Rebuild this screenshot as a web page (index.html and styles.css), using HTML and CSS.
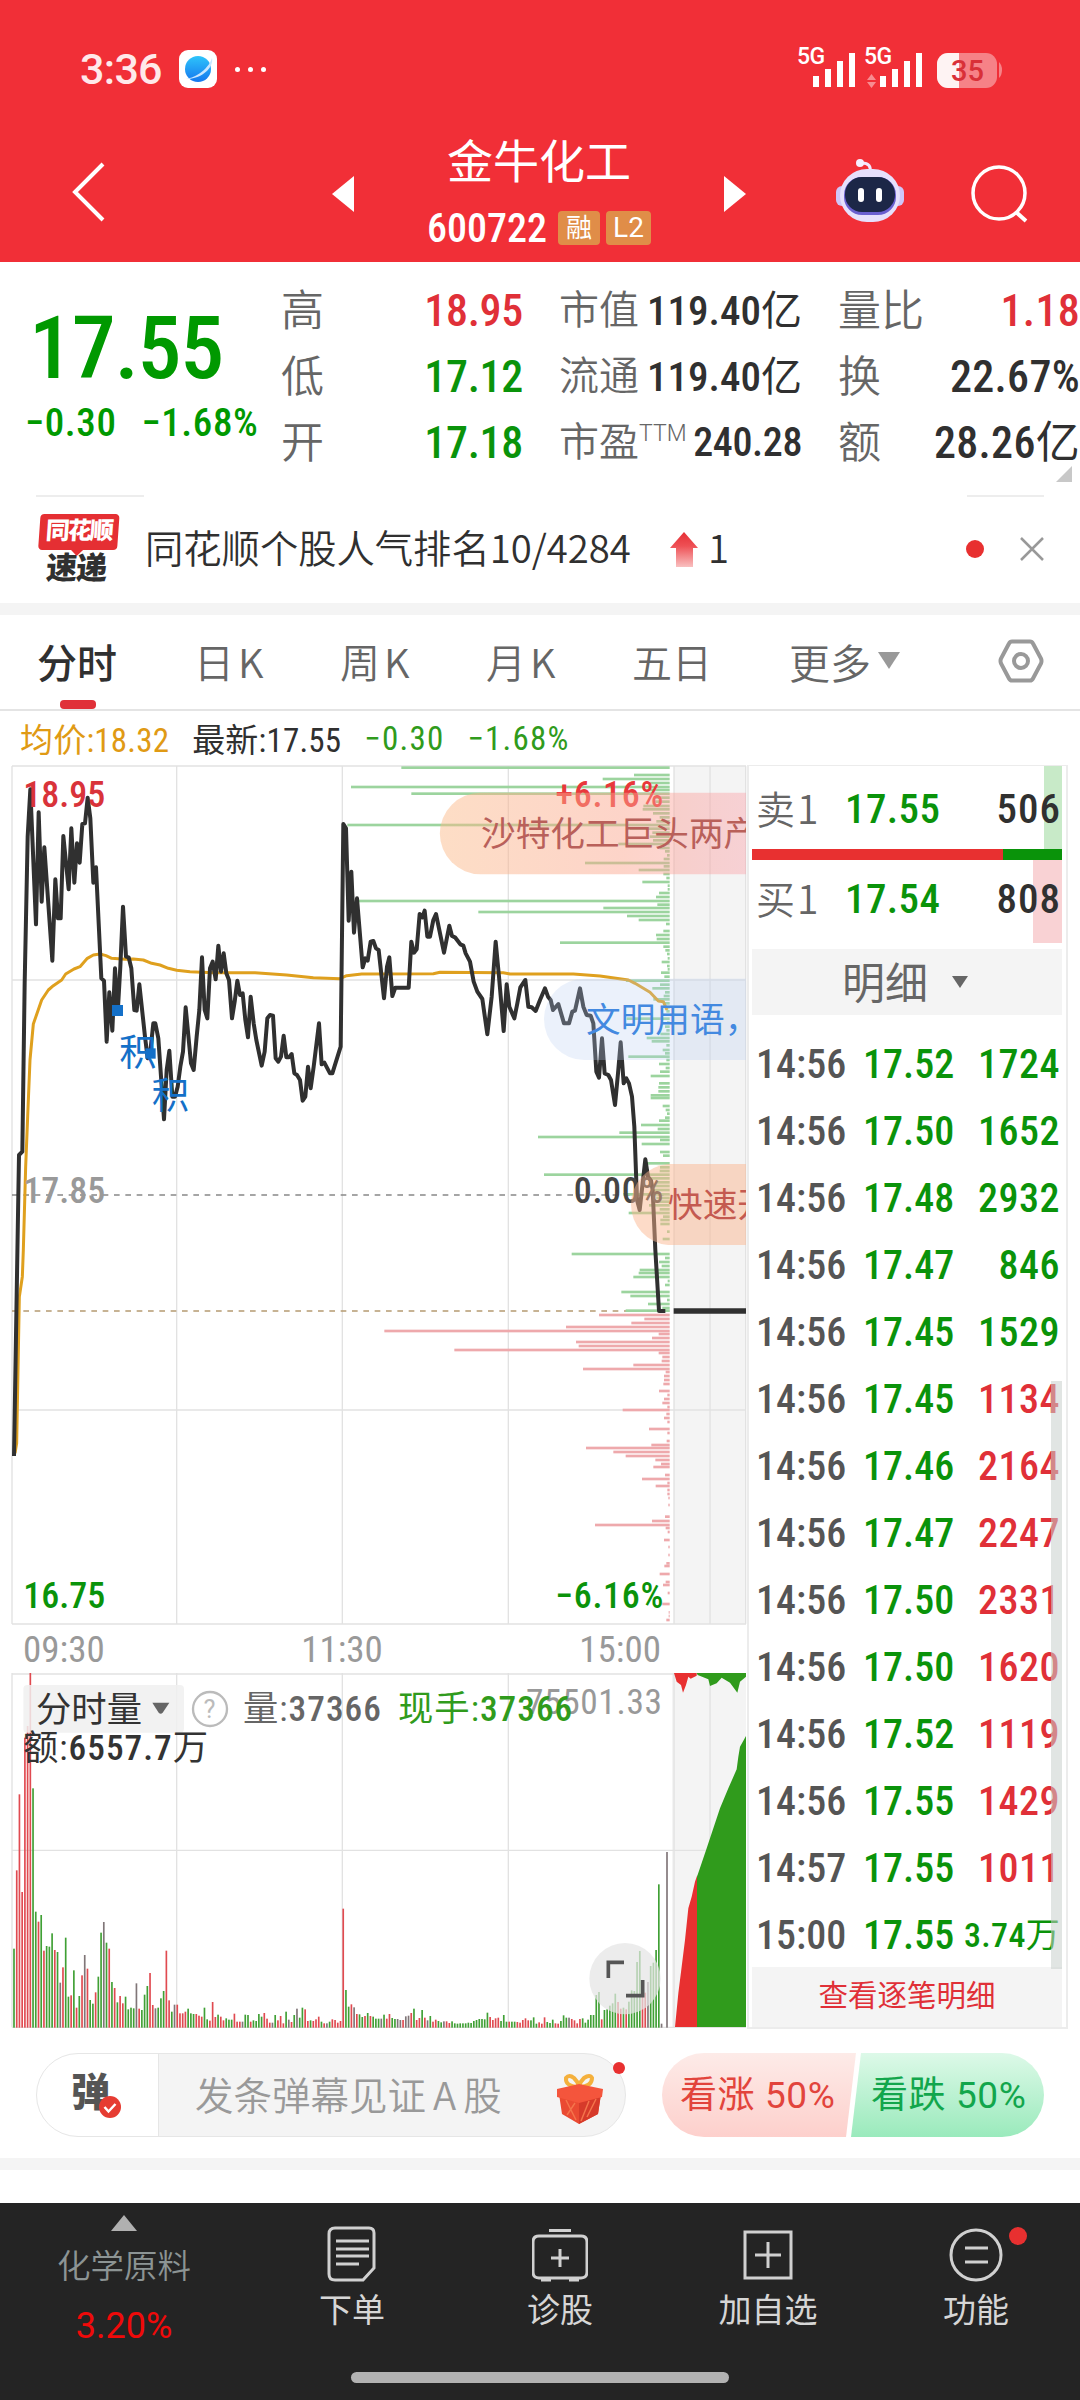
FILE: index.html
```
<!DOCTYPE html>
<html lang="zh-CN">

<head>
    <meta charset="UTF-8">
    <meta name="viewport" content="width=device-width, initial-scale=1.0">
    <title>金牛化工 600722</title>
    <link rel="stylesheet" href="styles.css">
</head>

<body>
    <header>
        <div class="status">
            <span class="clock">3:36</span>
            <svg class="app" width="38" height="38" viewBox="0 0 38 38">
                <defs>
                    <linearGradient id="planet" x1="0" y1="0" x2="0" y2="1">
                        <stop offset="0" stop-color="#2ec4fb" />
                        <stop offset="1" stop-color="#1577ee" />
                    </linearGradient>
                </defs>
                <rect width="38" height="38" rx="9" fill="#fff" />
                <circle cx="19" cy="19" r="13" fill="url(#planet)" />
                <path d="M5 29C15 29 29 20 33 8c2 9-10 22-28 21z" fill="#c9e6ff" />
            </svg>
            <span class="more"><i></i><i></i><i></i></span>
            <svg class="signals" width="206" height="44" viewBox="0 0 206 44">
                <g fill="#fff">
                    <text x="0" y="20" class="net">5G</text>
                    <text x="67" y="20" class="net">5G</text>
                    <path d="M16 32h6v11h-6zM28 25h6v18h-6zM40 17h6v26h-6zM52 9h6v34h-6z" />
                    <path d="M83 32h6v11h-6zM95 25h6v18h-6zM107 17h6v26h-6zM119 9h6v34h-6z" />
                    <path d="M70 36l4.500-6 4.500 6zM70 38l4.500 6 4.500-6z" opacity=".45" />
                    <rect x="140" y="9" width="60" height="35" rx="11" opacity=".4" />
                    <path d="M202 18q3 3 3 8t-3 8z" opacity=".4" />
                    <path d="M162 9h-11a11 11 0 0 0-11 11v13a11 11 0 0 0 11 11h11z" opacity=".9" />
                </g>
                <text x="154" y="37" class="power">35</text>
            </svg>
        </div>
        <div class="titlebar">
            <svg class="back" width="34" height="60" viewBox="0 0 34 60">
                <path d="M31 2L3 30l28 28" fill="none" stroke="#fff" stroke-width="4" />
            </svg>
            <svg class="prev" width="22" height="36" viewBox="0 0 22 36"><path d="M22 0v36L0 18z" fill="#fff" /></svg>
            <div class="names">
                <h1>金牛化工</h1>
                <p><b>600722</b><i>融</i><i>L2</i></p>
            </div>
            <svg class="next" width="22" height="36" viewBox="0 0 22 36"><path d="M0 0v36l22-18z" fill="#fff" /></svg>
            <svg class="robot" width="68" height="66" viewBox="0 0 68 66">
                <path d="M26 5q10 0 8 10" fill="none" stroke="#f3e8ff" stroke-width="3" />
                <circle cx="24" cy="5" r="4" fill="#f6efff" />
                <rect x="0" y="28" width="12" height="20" rx="6" fill="#cfc6f8" />
                <rect x="56" y="28" width="12" height="20" rx="6" fill="#cfc6f8" />
                <rect x="4" y="11" width="60" height="53" rx="27" fill="#e6e0fc" />
                <rect x="8" y="19" width="52" height="38" rx="18" fill="#6a5fd0" />
                <rect x="9" y="19" width="50" height="35" rx="17" fill="#1c2747" />
                <rect x="22" y="30" width="6" height="14" rx="3" fill="#fff" />
                <rect x="40" y="30" width="6" height="14" rx="3" fill="#fff" />
            </svg>
            <svg class="search" width="58" height="60" viewBox="0 0 58 60">
                <circle cx="28" cy="29" r="26" fill="none" stroke="#fff" stroke-width="3.500" />
                <path d="M45 48l10 9" stroke="#fff" stroke-width="4" />
            </svg>
        </div>
    </header>

    <section class="quote">
        <div class="price">
            <strong>17.55</strong>
            <p><span>−0.30</span><span>−1.68%</span></p>
        </div>
        <dl class="col1">
            <div><dt>高</dt><dd class="red">18.95</dd></div>
            <div><dt>低</dt><dd class="green">17.12</dd></div>
            <div><dt>开</dt><dd class="green">17.18</dd></div>
        </dl>
        <dl class="col2">
            <div><dt>市值</dt><dd>119.40<i>亿</i></dd></div>
            <div><dt>流通</dt><dd>119.40<i>亿</i></dd></div>
            <div><dt>市盈<sup>TTM</sup></dt><dd>240.28</dd></div>
        </dl>
        <dl class="col3">
            <div><dt>量比</dt><dd class="red">1.18</dd></div>
            <div><dt>换</dt><dd>22.67%</dd></div>
            <div><dt>额</dt><dd>28.26<i>亿</i></dd></div>
        </dl>
        <span class="corner"></span>
    </section>

    <section class="news">
        <div class="logo">
            <b>同花顺</b>
            <em>速递</em>
        </div>
        <p>同花顺个股人气排名10/4284</p>
        <svg class="up" width="28" height="35" viewBox="0 0 28 35">
            <defs>
                <linearGradient id="rise" x1="0" y1="0" x2="0" y2="1">
                    <stop offset="0" stop-color="#e62f35" />
                    <stop offset=".4" stop-color="#ee5055" />
                    <stop offset="1" stop-color="#f9c0c0" />
                </linearGradient>
            </defs>
            <path d="M14 0l14 16h-5v19H6V16H0z" fill="url(#rise)" />
        </svg>
        <p class="step">1</p>
        <span class="dot"></span>
        <svg width="24" height="24" viewBox="0 0 24 24"><path d="M1 1l22 22M23 1L1 23" stroke="#999" stroke-width="2.500" /></svg>
    </section>

    <nav class="tabs">
        <a class="on">分时</a>
        <a>日K</a>
        <a>周K</a>
        <a>月K</a>
        <a>五日</a>
        <a>更多<i></i></a>
        <svg width="46" height="44" viewBox="0 0 46 44">
            <path d="M14 2.500h18q2 0 3 2l8 15q1 2.500 0 5l-8 15q-1 2-3 2H14q-2 0-3-2l-8-15q-1-2.500 0-5l8-15q1-2 3-2z" fill="none" stroke="#999" stroke-width="4" />
            <circle cx="23" cy="22" r="7" fill="none" stroke="#999" stroke-width="4" />
        </svg>
    </nav>

    <div class="info">
        <span class="avg">均价:18.32</span>
        <span class="last">最新:17.55</span>
        <span class="diff">−0.30</span>
        <span class="diff">−1.68%</span>
    </div>

    <main>
        <div class="charts">
            <!-- both charts use 3 units per pixel -->
            <svg class="trend" width="747" height="860" viewBox="0 45 2241 2580">
                <defs>
                    <linearGradient id="hot">
                        <stop offset="0" stop-color="#fbb987" stop-opacity=".48" />
                        <stop offset=".6" stop-color="#fba58e" stop-opacity=".48" />
                        <stop offset="1" stop-color="#fb97a0" stop-opacity=".38" />
                    </linearGradient>
                    <clipPath id="plot"><rect x="0" y="45" width="2238" height="2580" /></clipPath>
                </defs>
                <rect x="2022" y="48" width="216" height="2574" fill="#f4f4f4" />
                <path class="grid" d="M36 48H2238M36 690H2238M36 1980H2238M36 2622H2238M36 48V2622M530 48V2622M1027 48V2622M1525 48V2622M2022 48V2622M2130 48V2622M2237 48V2622" />
                <path d="M36 1335H2009" stroke="#888" stroke-width="5" stroke-dasharray="17 17" />
                <path d="M36 1683H2009" stroke="#b59a72" stroke-width="5" stroke-dasharray="17 17" />
                <g id="depth"></g>
                <polyline class="avgline" points="45,2110 50,2080 58,1640 67,1580 70,1500 77,1250 83,1100 90,930 100,822 125,750 145,720 160,707 185,690 197,672 222,657 240,650 262,625 280,615 300,612 318,617 335,625 375,628 400,627 430,630 455,640 480,645 505,655 530,661 570,665 640,668 765,668 860,675 940,683 1020,686 1040,677 1085,672 1300,671 1320,667 1510,668 1530,672 1720,672 1800,678 1885,690 1905,700 1950,727 1975,753 1990,755 2001,780" />
                <polyline class="priceline" points="42,2118 57,1215 67,1205 74,700 83,260 91,118 108,523 116,187 125,455 133,292 157,632 166,388 174,505 182,505 190,258 206,418 214,235 223,398 231,280 239,338 247,222 255,220 263,143 271,205 280,398 288,352 304,685 312,692 320,875 328,727 337,842 345,655 353,790 361,650 369,470 378,620 386,622 394,655 403,780 410,782 418,703 435,860 443,925 452,895 460,820 466,820 475,865 492,1108 500,960 508,902 517,1040 525,1040 533,1010 541,950 549,905 557,772 573,940 581,960 590,860 598,780 606,622 614,780 622,805 630,655 638,635 647,688 655,587 663,665 671,610 679,670 687,690 696,805 704,755 712,692 720,735 728,730 736,810 744,862 752,740 761,820 769,870 785,947 794,905 802,805 810,795 819,797 827,925 835,935 843,920 851,857 859,922 867,922 875,912 883,970 891,975 900,990 908,1052 916,1040 924,950 932,1015 941,950 957,820 965,943 973,938 990,970 997,970 1022,890 1030,222 1038,235 1046,512 1054,365 1062,548 1071,445 1088,652 1096,625 1103,632 1112,575 1120,573 1128,595 1136,600 1152,745 1161,650 1168,622 1177,738 1186,713 1226,713 1234,575 1242,608 1250,598 1259,492 1267,502 1274,482 1282,560 1290,560 1300,510 1308,492 1332,608 1348,527 1356,558 1365,562 1381,583 1390,587 1397,610 1410,635 1421,695 1432,725 1447,747 1462,853 1475,740 1487,575 1497,680 1511,843 1520,703 1528,770 1543,805 1552,760 1561,712 1576,690 1585,770 1595,772 1607,783 1620,750 1635,715 1644,740 1652,750 1659,780 1675,762 1692,820 1707,820 1717,785 1725,782 1740,715 1750,770 1760,795 1772,797 1780,820 1789,965 1797,983 1806,865 1814,970 1825,975 1833,990 1845,1065 1854,970 1862,877 1871,1000 1879,985 1887,1000 1896,1040 1903,1130 1911,1350 1919,1380 1936,1228 1944,1280 1953,1292 1958,1320 1966,1500 1977,1683 1996,1683" />
                <path d="M2021 1683H2238" stroke="#303030" stroke-width="16" />
                <g class="mark">
                    <rect x="336" y="765" width="33" height="33" />
                    <rect x="436" y="895" width="31" height="31" />
                    <text x="358" y="948">积</text>
                    <text x="455" y="1078">积</text>
                </g>
                <g class="label">
                    <text x="70" y="170" fill="#d9333a">18.95</text>
                    <text x="70" y="1358" fill="#999">17.85</text>
                    <text x="70" y="2573" fill="#0a930a">16.75</text>
                    <text x="1992" y="170" fill="#e8383b" class="pct">+6.16%</text>
                    <text x="1992" y="1358" fill="#444" class="pct">0.00%</text>
                    <text x="1992" y="2573" fill="#0a930a" class="pct">−6.16%</text>
                </g>
                <g class="danmu" clip-path="url(#plot)">
                    <path d="M2240 128H1442a122 122 0 0 0 0 245H2240z" fill="url(#hot)" />
                    <text x="1443" y="287" fill="#b9605a">沙特化工巨头两产</text>
                    <path d="M2240 686H1754a122 122 0 0 0 0 244H2240z" fill="#b8ccf2" fill-opacity=".28" />
                    <text x="1758" y="845" fill="#4389e0">文明用语，</text>
                    <path d="M2240 1242H2004a122 122 0 0 0 0 243H2240z" fill="#fbb48c" fill-opacity=".48" />
                    <text x="2004" y="1400" fill="#c45a50">快速开</text>
                </g>
            </svg>
            <div class="axis"><span>09:30</span><span>11:30</span><span>15:00</span></div>
            <svg class="volume" width="747" height="355" viewBox="0 39 2241 1065">
                <rect x="2016" y="39" width="222" height="1062" fill="#f4f4f4" />
                <path class="grid" d="M36 42H2238M36 571H2238M36 1102H2238M36 39V1102M530 39V1102M1027 39V1102M1525 39V1102M2022 39V1102M2130 39V1102" />
                <g id="bars"></g>
                <path d="M2025 1101L2035 1000 2045 920 2055 840 2065 745 2075 710 2085 665 2092 645V1101zM2022 39L2030 65 2043 75 2049 98 2058 75 2065 50 2072 56 2090 47V39z" fill="#e83030" />
                <path d="M2091 1101V650L2120 565 2160 445 2185 385 2210 328 2215 290 2220 260 2238 228V1101zM2090 39L2093 45 2125 58 2130 78 2150 70 2165 53 2190 68 2212 98 2220 65 2238 50V39z" fill="#309b1c" />
                <rect x="70" y="75" width="482" height="143" rx="12" fill="#f0f0f0" fill-opacity=".85" />
                <path d="M457 128h51l-20 30q-6 6-12 0z" fill="#666" />
                <circle cx="630" cy="147" r="51" fill="none" stroke="#bbb" stroke-width="7" />
                <g class="label">
                    <text x="1988" y="163" fill="#999" class="pct">75501.33</text>
                    <text x="108" y="187" fill="#333" class="cn">分时量</text>
                    <text x="630" y="174" fill="#bbb" text-anchor="middle" class="ask">?</text>
                    <text x="729" y="183" fill="#666">量:<tspan>37366</tspan></text>
                    <text x="1194" y="183" fill="#309b1c">现手:<tspan>37366</tspan></text>
                    <text x="69" y="299" fill="#333">额:<tspan>6557.7</tspan>万</text>
                </g>
                <circle cx="1875" cy="956" r="107" fill="#e4e4e4" fill-opacity=".72" />
                <path d="M1825 954V907H1872M1878 1007H1928V960" fill="none" stroke="#555" stroke-width="11" />
            </svg>
        </div>

        <aside>
            <div class="level sell"><span>卖1</span><b>17.55</b><em>506</em></div>
            <div class="ratio"></div>
            <div class="level buy"><span>买1</span><b>17.54</b><em>808</em></div>
            <div class="pick">明细<i></i></div>
            <ul id="ticks">
                <li><span>14:56</span><b>17.52</b><em class="green">1724</em></li>
                <li><span>14:56</span><b>17.50</b><em class="green">1652</em></li>
                <li><span>14:56</span><b>17.48</b><em class="green">2932</em></li>
                <li><span>14:56</span><b>17.47</b><em class="green">846</em></li>
                <li><span>14:56</span><b>17.45</b><em class="green">1529</em></li>
                <li><span>14:56</span><b>17.45</b><em class="red">1134</em></li>
                <li><span>14:56</span><b>17.46</b><em class="red">2164</em></li>
                <li><span>14:56</span><b>17.47</b><em class="red">2247</em></li>
                <li><span>14:56</span><b>17.50</b><em class="red">2331</em></li>
                <li><span>14:56</span><b>17.50</b><em class="red">1620</em></li>
                <li><span>14:56</span><b>17.52</b><em class="red">1119</em></li>
                <li><span>14:56</span><b>17.55</b><em class="red">1429</em></li>
                <li><span>14:57</span><b>17.55</b><em class="red">1011</em></li>
                <li><span>15:00</span><b>17.55</b><em class="green small">3.74<i>万</i></em></li>
            </ul>
            <a class="all">查看逐笔明细</a>
        </aside>
    </main>

    <section class="talk">
        <div class="send">
            <span class="toggle">弹
                <svg width="22" height="22" viewBox="0 0 22 22">
                    <circle cx="11" cy="11" r="11" fill="#e63c32" />
                    <path d="M5.500 11l4 4.500 7-7.500" fill="none" stroke="#fff" stroke-width="2.500" />
                </svg>
            </span>
            <span class="hint">发条弹幕见证<i>A</i>股</span>
            <svg class="gift" width="46" height="50" viewBox="0 0 46 50">
                <path d="M21 13Q8 12 9 4q3-4 8 0 4 4 5 8 1-4 5-8 6-4 8 0 0 8-12 9z" fill="none" stroke="#f4b03c" stroke-width="4" />
                <path d="M2 20l20 6 22-6-3 20-19 10-17-10z" fill="#ea4a32" />
                <path d="M22 26l22-6-3 20-19 10z" fill="#d63a2a" />
                <path d="M0 15l22-5 24 5-1 8-23 6-22-6z" fill="#f4553c" />
                <path d="M9 26l10 20M18 29l-8 12M32 27l-8 20M39 25l-9 18" stroke="#f4744c" stroke-width="1.500" />
            </svg>
            <span class="dot"></span>
        </div>
        <div class="vote">
            <span class="bull">看涨 50%</span>
            <span class="bear">看跌 50%</span>
        </div>
    </section>

    <footer>
        <div class="sector">
            <i></i>
            <span>化学原料</span>
            <b>3.20%</b>
        </div>
        <div class="item">
            <svg width="56" height="56" viewBox="0 0 56 56">
                <path d="M11 2h34q5 0 5 5v35l-11 12H11q-6 0-6-6V8q0-6 6-6zM12 15h33M12 23h33M12 30h33M12 38h23" />
            </svg>
            <span>下单</span>
        </div>
        <div class="item">
            <svg width="56" height="56" viewBox="0 0 56 56">
                <path d="M17 4.500h22M7 10h42q6 0 6 6v30q0 6-6 6H7q-6 0-6-6V16q0-6 6-6zM28 23v18M19 32h18M9 54h10M37 54h10" />
            </svg>
            <span>诊股</span>
        </div>
        <div class="item">
            <svg width="56" height="56" viewBox="0 0 56 56">
                <path d="M5 6h46v46H5zM28 16v26M15 29h26" />
            </svg>
            <span>加自选</span>
        </div>
        <div class="item">
            <svg width="56" height="56" viewBox="0 0 56 56">
                <circle cx="28" cy="29" r="25" />
                <path d="M17 22h23M17 36h23" />
            </svg>
            <span>功能</span>
            <em class="dot"></em>
        </div>
        <div class="homebar"></div>
    </footer>

    <script src="script.js"></script>
</body>

</html>
```
FILE: styles.css
```
* {
    box-sizing: border-box;
}

body {
    margin: 0;
    background: #fff;
    color: #303030;
    font-family: "Roboto Condensed", "Noto Sans CJK SC", sans-serif;
    overflow-x: hidden;
}

h1, p, ul, dl, dd {
    margin: 0;
    padding: 0;
    font-weight: 400;
}

i, em {
    font-style: normal;
}

svg {
    display: block;
    flex: none;
}

.red {
    color: #e03038;
}

.green {
    color: #0a930a;
}

.dot {
    border-radius: 50%;
    background: #e83030;
}

/* header */
header {
    height: 262px;
    background: #f12f37;
    color: #fff;
}

.status {
    height: 138px;
    padding: 0 79px 0 80px;
    display: flex;
    align-items: center;
}

.clock {
    font: 500 43px Roboto, sans-serif;
    color: #ffe9ea;
    width: 99px;
    letter-spacing: -.7px;
}

.more {
    display: flex;
    gap: 8px;
    margin-left: 18px;
}

.more i {
    width: 5px;
    height: 5px;
    border-radius: 50%;
    background: #fff;
}

.signals {
    margin: -6px -2px 0 auto;
    overflow: visible;
}

.net {
    font: 500 23px Roboto, sans-serif;
    letter-spacing: -.5px;
}

.power {
    font: 500 29px Roboto, sans-serif;
    fill: #d93038;
}

.titlebar {
    display: flex;
    align-items: flex-start;
}

.back {
    margin: 24px 0 0 72px;
}

.prev {
    margin: 38px 0 0 226px;
}

.names {
    width: 370px;
    text-align: center;
}

.names h1 {
    font-size: 46px;
    line-height: 48px;
}

.names p {
    display: flex;
    justify-content: center;
    align-items: center;
    gap: 6px;
    margin-top: 22px;
    height: 40px;
}

.names b {
    font-size: 40px;
    font-weight: 500;
    margin-right: 5px;
}

.names i {
    background: #e08d48;
    border-radius: 4px;
    height: 34px;
    line-height: 34px;
    padding: 0 8px;
    font-size: 26px;
}

.names i:last-child {
    font: 28px/34px Roboto, sans-serif;
    padding: 0 7px;
}

.next {
    margin: 38px 90px 0 0;
}

.robot {
    margin: 20px 67px 0 0;
}

.search {
    margin-top: 26px;
}

/* quote */
.quote {
    position: relative;
    height: 233px;
    padding-top: 16px;
    display: flex;
}

.price {
    width: 281px;
    color: #009900;
}

.price strong {
    display: block;
    margin: 26px 0 0 29px;
    font-size: 88px;
    line-height: 88px;
    font-weight: 500;
    letter-spacing: -1.3px;
}

.price p {
    display: flex;
    gap: 25px;
    margin: 8px 0 0 25px;
    font-size: 39px;
    line-height: 46px;
    font-weight: 500;
    letter-spacing: .6px;
    white-space: nowrap;
}

.quote dl div {
    display: flex;
    justify-content: space-between;
    align-items: center;
    height: 66px;
    line-height: 66px;
}

.quote dt {
    color: #666;
    font-size: 43px;
    font-weight: 350;
    white-space: nowrap;
}

.quote dd {
    font-size: 44px;
    font-weight: 500;
    white-space: nowrap;
}

.quote dd i {
    font-weight: 400;
}

.quote sup {
    font: 300 23px/20px Roboto, sans-serif;
    vertical-align: 15px;
}

.col1 {
    width: 242px;
}

.col1 dd {
    letter-spacing: -.3px;
}

.col2 {
    width: 243px;
    margin-left: 36px;
}

.quote .col2 dt {
    font-size: 40px;
}

.quote .col2 dd {
    font-size: 41px;
}

.quote .col2 div:last-child dd {
    font-size: 40px;
    letter-spacing: -.4px;
}

.col3 {
    width: 242px;
    margin-left: 36px;
}

.col3 dd {
    letter-spacing: .3px;
}

.corner {
    position: absolute;
    right: 8px;
    bottom: 13px;
    border-left: 16px solid transparent;
    border-bottom: 16px solid #c8c8c8;
}

/* news */
.news {
    height: 120px;
    padding: 0 36px;
    display: flex;
    align-items: center;
    border-bottom: 12px solid #f4f4f4;
    background: linear-gradient(#ededed, #ededed) 36px 0 / 108px 2px no-repeat, linear-gradient(#ededed, #ededed) 967px 0 / 77px 2px no-repeat;
}

.logo {
    width: 79px;
    margin: 3px 28px 0 2px;
    text-align: center;
    transform: skewX(-4deg);
}

.logo b {
    display: block;
    position: relative;
    height: 36px;
    background: #e52f33;
    border-radius: 4px;
    color: #fff;
    font-size: 24px;
    line-height: 35px;
    font-weight: 900;
    letter-spacing: -2px;
}

.logo b::after {
    content: "";
    position: absolute;
    left: 33px;
    top: 36px;
    border: 6px solid transparent;
    border-top-color: #e52f33;
}

.logo em {
    display: block;
    font-size: 31px;
    line-height: 38px;
    font-weight: 900;
    letter-spacing: -1px;
}

.news p {
    font-family: "Noto Sans CJK SC", sans-serif;
    font-size: 38.3px;
    line-height: 50px;
    font-weight: 350;
    width: 525px;
    margin-top: -4px;
    white-space: nowrap;
}

.news .up {
    margin-right: 10px;
}

.news .step {
    width: auto;
    margin-right: auto;
}

.news .dot {
    width: 18px;
    height: 18px;
    margin-right: 36px;
}

/* tabs */
.tabs {
    display: flex;
    align-items: center;
    height: 96px;
    border-bottom: 2px solid #e4e4e4;
    padding: 0 36px 3px 37px;
    font-size: 40px;
    color: #666;
}

.tabs a {
    position: relative;
    font-family: "Noto Sans CJK SC", sans-serif;
    font-weight: 350;
    line-height: 60px;
    letter-spacing: 4px;
    white-space: nowrap;
    width: 146px;
}

.tabs a:first-child {
    width: 157px;
}

.tabs a:nth-child(5) {
    width: 157px;
    letter-spacing: 0;
}

.tabs a:nth-child(6) {
    width: auto;
    display: flex;
    align-items: center;
    gap: 7px;
    font-size: 41px;
    letter-spacing: 0;
}

.tabs a i {
    border: 11px solid transparent;
    border-top: 17px solid #999;
    border-bottom: 0;
}

.tabs .on {
    color: #303030;
    font-weight: 500;
    letter-spacing: 0;
}

.tabs .on::after {
    content: "";
    position: absolute;
    left: 23px;
    bottom: -18px;
    width: 36px;
    height: 9px;
    border-radius: 4px;
    background: #e03038;
}

.tabs svg {
    margin-left: auto;
}

.info {
    height: 54px;
    padding: 0 0 0 20px;
    display: flex;
    align-items: center;
    gap: 23px;
    font-size: 33px;
    letter-spacing: .2px;
}

.avg {
    color: #e09a14;
}

.diff {
    color: #309b1c;
    letter-spacing: 1.2px;
    padding-top: 1px;
}

/* charts */
main {
    display: flex;
    height: 1264px;
}

.charts {
    width: 747px;
}

.grid {
    stroke: #e2e2e2;
    stroke-width: 4;
    fill: none;
}

.avgline {
    fill: none;
    stroke: #dfa01e;
    stroke-width: 9;
    stroke-linejoin: round;
}

.priceline {
    fill: none;
    stroke: #303030;
    stroke-width: 12;
    stroke-linejoin: round;
}

.label {
    font-size: 108px;
    font-weight: 500;
}

.label .pct {
    letter-spacing: 2px;
    text-anchor: end;
}

.volume .label {
    font-size: 106px;
    font-weight: 400;
    letter-spacing: 3px;
}

.volume .label tspan {
    font-weight: 500;
}

.volume .label .ask {
    font: 76px Roboto, sans-serif;
}

.volume .label .cn {
    letter-spacing: 0;
}

.danmu {
    font-size: 104px;
}

.mark {
    fill: #1470c8;
    font-size: 112px;
}

.axis {
    height: 48px;
    padding: 0 86px 0 23px;
    display: flex;
    justify-content: space-between;
    font-size: 37px;
    line-height: 50px;
    color: #999;
}

/* order book */
aside {
    width: 321px;
    border: 2px solid #ececec;
    border-top-width: 1px;
    padding: 0 4px 0 3px;
}

.level {
    display: flex;
    align-items: center;
    height: 83px;
    padding: 2px 1px 0 4px;
    font-size: 41px;
}

.level span {
    width: 89px;
    font: 350 39px/60px "Noto Sans CJK SC", sans-serif;
    letter-spacing: 2px;
    margin-top: -3px;
    color: #666;
}

.level b {
    color: #0a930a;
    font-weight: 500;
    letter-spacing: .4px;
}

.level em {
    margin-left: auto;
    font-weight: 500;
    letter-spacing: 1px;
}

.sell {
    background: linear-gradient(#c8eac8, #c8eac8) right / 18px 100% no-repeat;
}

.buy {
    background: linear-gradient(#f9d2d4, #f9d2d4) right / 29px 100% no-repeat;
    padding-bottom: 8px;
}

.ratio {
    height: 11px;
    background: linear-gradient(90deg, #e83030 251px, #0a930a 251px);
}

.pick {
    display: flex;
    align-items: center;
    justify-content: center;
    gap: 24px;
    height: 66px;
    margin: 6px 0 16px;
    padding: 0 4px 4px 0;
    background: #f4f4f4;
    color: #666;
    font-size: 43px;
}

.pick i {
    border: 8px solid transparent;
    border-top: 12px solid #666;
    border-bottom: 0;
    margin-top: 4px;
}

ul {
    position: relative;
    list-style-type: none;
    font-size: 40px;
    font-weight: 500;
}

ul::after {
    content: "";
    position: absolute;
    right: 0;
    bottom: 0;
    width: 11px;
    height: 588px;
    background: rgba(200, 208, 204, 0.55);
}

li {
    display: flex;
    align-items: center;
    height: 67px;
    line-height: 67px;
    padding: 0 2px 0 4px;
}

li span {
    width: 107px;
    color: #555;
}

li b {
    color: #0a930a;
    font-weight: 500;
}

li em {
    margin-left: auto;
    letter-spacing: .5px;
}

li .small {
    font-size: 34px;
    letter-spacing: .3px;
}

li .small i {
    font-weight: 400;
}

.all {
    display: block;
    height: 60px;
    margin-top: -2px;
    background: #f4f4f4;
    color: #e03038;
    font-size: 29.5px;
    line-height: 59px;
    text-align: center;
}

/* danmu bar */
.talk {
    display: flex;
    justify-content: space-between;
    height: 141px;
    padding: 24px 36px 0;
    border-bottom: 12px solid #f4f4f4;
}

.send {
    position: relative;
    width: 590px;
    height: 84px;
    border: 1px solid #e6e6e6;
    border-radius: 42px;
    display: flex;
    align-items: center;
    background: linear-gradient(90deg, #fff 121px, #e6e6e6 121px, #e6e6e6 122px, #f4f4f4 122px);
}

.toggle {
    position: relative;
    width: 158px;
    margin-top: -4px;
    padding-left: 34px;
    color: #555;
    font-size: 39px;
    font-weight: 900;
    line-height: 60px;
}

.toggle svg {
    position: absolute;
    left: 62px;
    top: 33px;
}

.hint {
    font-family: "Noto Sans CJK SC", sans-serif;
    font-size: 38.5px;
    font-weight: 350;
    color: #999;
    width: 362px;
    margin-top: -5px;
    white-space: nowrap;
}

.hint i {
    margin: 0 7px;
}

.gift {
    margin-top: 8px;
}

.send .dot {
    position: absolute;
    right: 0;
    top: 8px;
    width: 12px;
    height: 12px;
}

.vote {
    display: flex;
    width: 382px;
    height: 84px;
    border-radius: 42px;
    overflow: hidden;
    font: 37px/85px Roboto, "Noto Sans CJK SC", sans-serif;
    letter-spacing: .6px;
}

.bull {
    width: 194px;
    padding-left: 18px;
    background: linear-gradient(#fdebe8, #fdd0cc);
    color: #e2443c;
    clip-path: polygon(0 0, 100% 0, 184px 100%, 0 100%);
}

.bear {
    width: 193px;
    margin-left: -5px;
    padding-left: 20px;
    background: linear-gradient(#ddf9e8, #9aeabc);
    color: #12a64c;
    clip-path: polygon(10px 0, 100% 0, 100% 100%, 0 100%);
}

/* bottom nav */
footer {
    position: relative;
    display: flex;
    height: 197px;
    margin-top: 33px;
    background: #242424;
    color: #d6d6d6;
    font-size: 33px;
}

.sector {
    width: 248px;
    padding-top: 12px;
    display: flex;
    flex-direction: column;
    align-items: center;
    line-height: 50px;
    color: #8c9494;
}

.sector i {
    border: 13px solid transparent;
    border-bottom: 16px solid #b0b0b0;
    border-top: 0;
}

.sector span {
    margin-top: 11px;
    font-size: 33.5px;
    font-weight: 350;
}

.sector b {
    font: 36px/50px Roboto, sans-serif;
    margin-top: 9px;
    color: #f00a0a;
}

.item {
    position: relative;
    width: 208px;
    padding-top: 23px;
    display: flex;
    flex-direction: column;
    align-items: center;
}

.item svg {
    fill: none;
    stroke: #d0d0d0;
    stroke-width: 3;
}

.item span {
    line-height: 50px;
    margin-top: 4px;
}

.item .dot {
    position: absolute;
    right: 53px;
    top: 24px;
    width: 18px;
    height: 18px;
}

.homebar {
    position: absolute;
    left: 351px;
    bottom: 17px;
    width: 378px;
    height: 11px;
    border-radius: 6px;
    background: #b2b2b2;
}
```
FILE: script.js
```
// volume per minute: direction letter + height, "-" is an empty minute
const volume = `g237 r472 r700 r407 r870 r905 r1064 g718 g348 r318 g338 r231 g245 g243 g283 r233 g227 k135 r181 g270
g93 r97 g172 r60 g95 r157 k218 r177 g83 g72 r106 g153 g285 k317 g255 r237 g137 r119 g76 r95 r73 g93 g55 g60 g58 k133
r57 g53 g99 g125 r164 r68 k58 g60 g88 g110 r231 r82 g48 k69 r69 r43 r43 r48 g57 g43 g41 r41 r36 r33 g60 g25 r21 r77
r32 g39 r33 r22 g28 g24 g24 r42 r18 r18 k18 g39 g38 r18 g22 g20 g41 g33 r44 r27 r15 k15 g38 r22 r35 r13 g48 k24 r17
g38 k57 g30 g60 r55 r20 g22 r20 r25 r33 g18 r13 k13 g18 r25 r23 r15 r20 r357 g113 g63 r70 k61 r41 g40 g32 r35 g44
r35 g33 g27 g27 k27 g39 r27 r41 g29 g26 k26 k23 r23 k34 k36 r44 g57 r23 r29 g53 r30 k22 g35 r18 r24 g20 g16 k19 r19
r14 g19 g13 g12 g13 g13 g13 g15 g14 g20 g23 g26 g26 g25 g45 r32 r23 r28 r30 g20 g38 g18 r18 g18 g18 r17 r15 r23 r28
r22 g22 g31 g12 r16 r12 r31 g17 g14 g24 r13 r12 g20 g37 g30 k30 r26 r22 r13 r26 g28 g15 g24 g38 g38 g98 g107 r25 g53
g55 g66 g73 g102 r77 r57 g60 r55 g78 g112 g110 g197 g230 r110 r105 k137 g185 g195 g233 g430 k12 - k527`.split(/\s+/);

const colors = { r: '#e04a50', g: '#40a035', k: '#807678' };

let bars = '';
const step = (2001 - 42) / (volume.length - 1);
volume.forEach(function (v, i) {
    if (v === '-') return;
    const h = Number(v.slice(1));
    const x = 42 + i * step - 2.5;
    bars += `<rect x="${x.toFixed(1)}" y="${1103 - h}" width="5" height="${h}" fill="${colors[v[0]]}"/>`;
});
document.getElementById('bars').innerHTML = bars;

// traded amount by price: [y, length]
const sells = [
    [53, 805], [75, 107], [87, 201], [99, 59], [111, 956], [120, 60], [131, 775], [143, 45], [155, 50], [168, 79], [178, 81],
    [190, 50], [202, 30], [214, 40], [225, 967], [236, 119], [248, 52], [260, 60], [271, 50], [282, 154], [294, 30], [304, 14],
    [316, 8], [327, 18], [339, 254], [349, 18], [360, 93], [372, 19], [384, 10], [396, 82], [407, 6], [418, 6], [429, 32],
    [441, 41], [453, 934], [464, 37], [474, 199], [486, 574], [498, 128], [510, 93], [522, 11], [543, 19], [555, 41], [567, 39],
    [578, 329], [590, 19], [601, 13], [612, 8], [625, 6], [636, 24], [648, 8], [658, 6], [668, 26], [680, 16], [692, 131],
    [704, 29], [715, 52], [727, 14], [738, 18], [748, 49], [760, 20], [772, 12], [784, 10], [806, 129], [818, 8], [830, 14],
    [841, 10], [852, 28], [864, 69], [874, 54], [886, 10], [900, 21], [910, 14], [920, 124], [930, 10], [942, 32], [954, 12],
    [965, 29], [978, 57], [1000, 32], [1012, 34], [1024, 34], [1036, 57], [1044, 57], [1068, 21], [1080, 12], [1091, 8],
    [1103, 14], [1112, 32], [1125, 86], [1137, 36], [1148, 151], [1161, 395], [1170, 29], [1182, 84], [1206, 29], [1217, 20],
    [1240, 69], [1252, 29], [1263, 30], [1274, 377], [1285, 59], [1297, 40], [1308, 62], [1320, 50], [1333, 139], [1344, 40],
    [1355, 50], [1366, 62], [1378, 30], [1389, 123], [1400, 20], [1410, 28], [1422, 28], [1445, 8], [1467, 21], [1512, 294],
    [1524, 14], [1536, 32], [1548, 24], [1560, 90], [1569, 93], [1581, 109], [1593, 6], [1605, 14], [1626, 145], [1638, 118],
    [1650, 8], [1662, 65], [1674, 22], [1682, 132]
];
const buys = [
    [1695, 212], [1707, 76], [1719, 115], [1731, 311], [1743, 856], [1752, 33], [1764, 53], [1776, 281], [1788, 273],
    [1800, 646], [1809, 33], [1821, 22], [1833, 24], [1845, 109], [1857, 260], [1866, 12], [1878, 17], [1890, 17], [1902, 19],
    [1923, 32], [1935, 7], [1947, 17], [1959, 22], [1971, 7], [1980, 141], [1992, 10], [2004, 17], [2016, 7], [2037, 62],
    [2049, 7], [2073, 9], [2085, 55], [2094, 251], [2106, 169], [2118, 132], [2130, 43], [2142, 26], [2151, 49], [2175, 14],
    [2187, 83], [2199, 7], [2208, 42], [2220, 7], [2232, 7], [2244, 4], [2265, 4], [2300, 14], [2313, 53], [2325, 224],
    [2334, 12], [2346, 6], [2370, 17], [2391, 4], [2415, 4], [2440, 10], [2448, 16], [2472, 30], [2496, 12], [2505, 20],
    [2529, 6], [2562, 22], [2587, 3], [2598, 3], [2610, 10]
];

function depth(list, color) {
    return list.map(d => `<rect x="${2009 - d[1]}" y="${d[0] - 4}" width="${d[1]}" height="8" fill="${color}"/>`).join('');
}
document.getElementById('depth').innerHTML = depth(sells, '#9cd49e') + depth(buys, '#eea9ac');
```
